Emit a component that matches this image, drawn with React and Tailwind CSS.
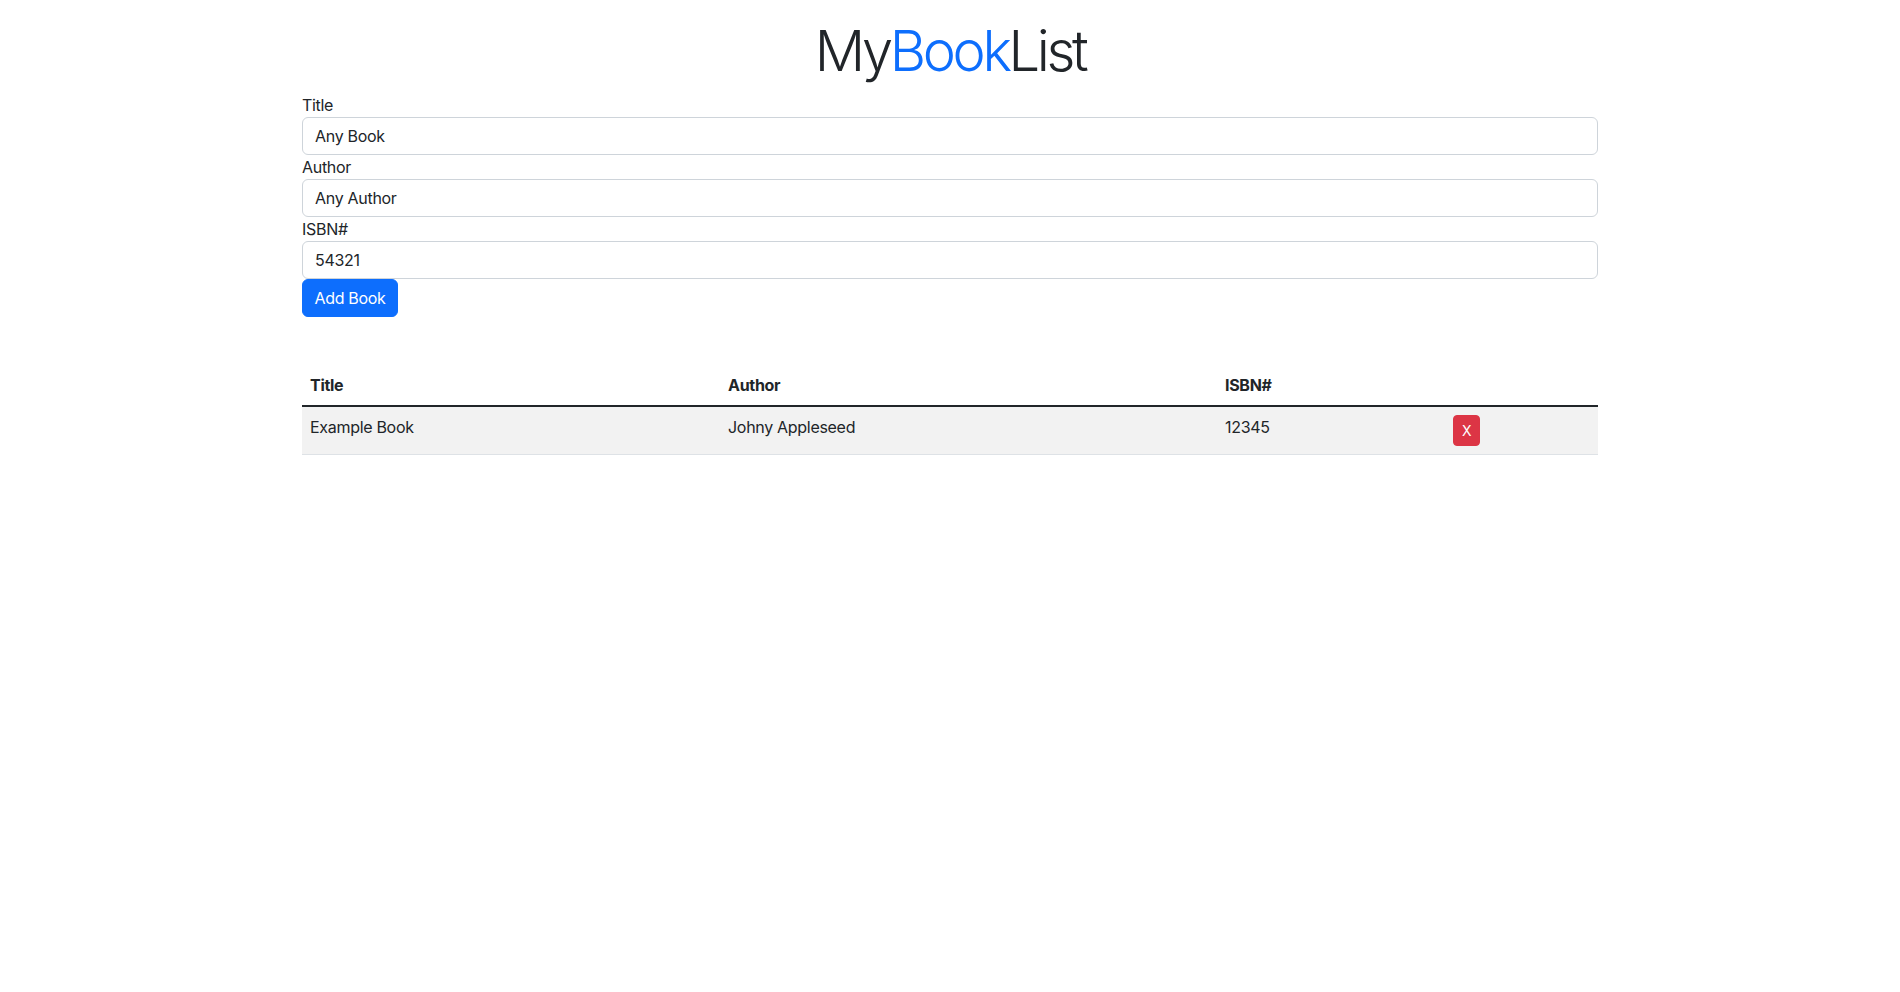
import React from "react";

export default function App() {
  const font = { fontFamily: 'Inter, "Noto Sans", "Liberation Sans", sans-serif' };
  return (
    <div className="min-h-[992px] bg-white text-[#212529] text-[16px] leading-6 tracking-[-0.3px]" style={font}>
      <div className="mx-auto w-[1320px] px-3">
        <h1 className="pt-[18px] mb-2 text-center text-[56px] font-light leading-[1.2] tracking-[-3.4px]">
          My<span className="text-[#0d6efd]">Book</span>List
        </h1>
        <form className="flex flex-col" onSubmit={(e) => e.preventDefault()}>
          <label className="block h-6">Title</label>
          <input
            className="block h-[38px] w-full rounded-[6px] border border-[#ced4da] px-3 py-[6px] outline-none"
            defaultValue="Any Book"
          />
          <label className="block h-6">Author</label>
          <input
            className="block h-[38px] w-full rounded-[6px] border border-[#ced4da] px-3 py-[6px] outline-none"
            defaultValue="Any Author"
          />
          <label className="block h-6">ISBN#</label>
          <input
            className="block h-[38px] w-full rounded-[6px] border border-[#ced4da] px-3 py-[6px] outline-none"
            defaultValue="54321"
          />
          <div>
            <button
              type="submit"
              className="h-[38px] w-[96px] rounded-[6px] border border-[#0d6efd] bg-[#0d6efd] text-white"
            >
              Add Book
            </button>
          </div>
        </form>
        <table className="mt-12 w-full table-fixed border-collapse text-left">
          <thead>
            <tr>
              <th className="w-[418px] p-2 font-bold">Title</th>
              <th className="w-[497px] p-2 font-bold">Author</th>
              <th className="w-[228px] p-2 font-bold">ISBN#</th>
              <th className="p-2"></th>
            </tr>
          </thead>
          <tbody className="border-t-2 border-[#212529]">
            <tr className="border-b border-[#dee2e6] bg-[#f2f2f2]">
              <td className="p-2 align-top">Example Book</td>
              <td className="p-2 align-top">Johny Appleseed</td>
              <td className="p-2 align-top">12345</td>
              <td className="p-2 align-top">
                <button className="block h-[31px] w-[27px] rounded-[4px] border border-[#dc3545] bg-[#dc3545] text-[14px] leading-[21px] text-white">
                  X
                </button>
              </td>
            </tr>
          </tbody>
        </table>
      </div>
    </div>
  );
}
